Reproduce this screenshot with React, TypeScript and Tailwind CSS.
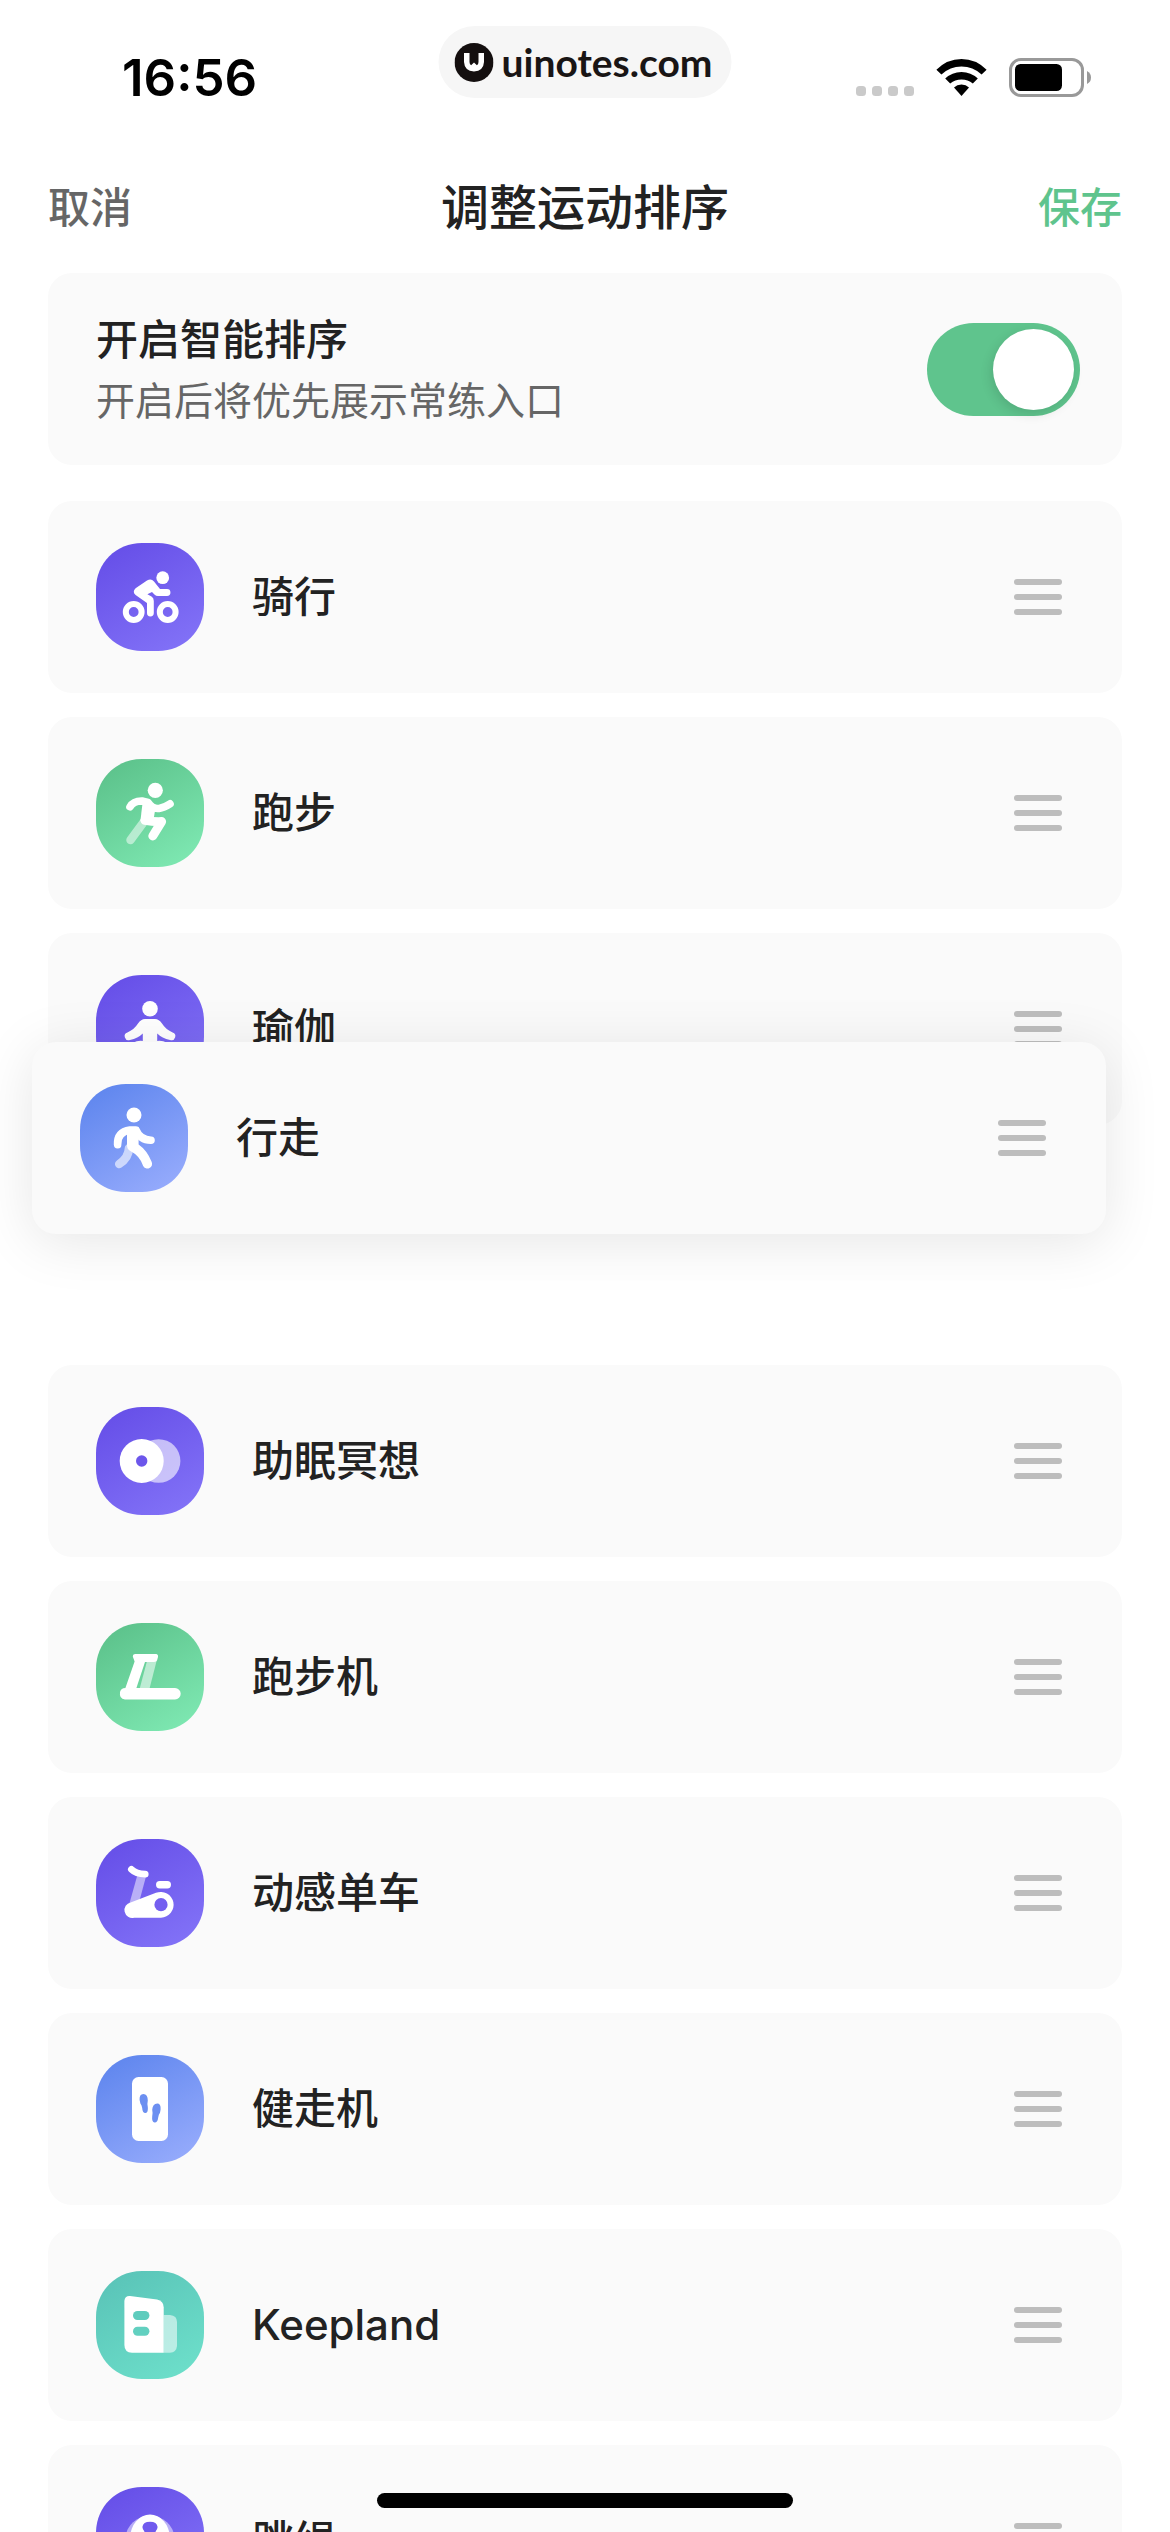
import { useState } from "react";
import type { ReactNode } from "react";

type Tone = "purple" | "green" | "blue" | "teal";

type Sport = {
  id: string;
  name: string;
  tone: Tone;
  glyph: ReactNode;
  dragging?: boolean;
};

const TONES: Record<Tone, [string, string]> = {
  purple: ["#664fe8", "#8272f7"],
  green: ["#5cc28b", "#7ee8b2"],
  blue: ["#5f86ee", "#96abfc"],
  teal: ["#5ac4b8", "#6ddfca"],
};

const SPORTS: Sport[] = [
  {
    id: "cycling",
    name: "骑行",
    tone: "purple",
    glyph: (
      <>
        <circle cx="66.7" cy="34.7" r="6.4" />
        <g fill="none" stroke="#fff" strokeWidth="6">
          <circle cx="37.7" cy="69" r="7.9" />
          <circle cx="71.7" cy="69" r="7.9" />
        </g>
        <path d="M51 37.6 Q55 35 58 38.4 L64 46 H71 A3.4 3.4 0 0 1 71 52.9 H62 Q60 52.9 58.4 51.4 L56 49 L51.4 51.2 L55.5 53.6 Q57.8 55 57.8 58 V70 A3.3 3.3 0 0 1 51 70 V60 L39.6 52 Q36 48.8 39.6 45.2 Z" />
      </>
    ),
  },
  {
    id: "running",
    name: "跑步",
    tone: "green",
    glyph: (
      <>
        <path d="M47 64 L34.5 81" fill="none" stroke="#fff" strokeOpacity="0.5" strokeWidth="8.5" strokeLinecap="round" />
        <circle cx="59.3" cy="31.3" r="7.6" />
        <path d="M34 47.8 Q37.5 41.8 46 42 L52 43.4 Q57 50.4 63 49.4 Q68 48.8 74 44.8" fill="none" stroke="#fff" strokeWidth="7.6" strokeLinecap="round" strokeLinejoin="round" />
        <path d="M47 40 L60 46 L57.6 60 L52 66 L44.4 62 Z" />
        <path d="M49 61.4 Q58 63 65.6 62.6 L56.8 77" fill="none" stroke="#fff" strokeWidth="9" strokeLinecap="round" strokeLinejoin="round" />
      </>
    ),
  },
  {
    id: "yoga",
    name: "瑜伽",
    tone: "purple",
    glyph: (
      <>
        <circle cx="54" cy="33.7" r="7.8" />
        <path d="M49 44 H59 Q63 44 66 48.6 Q70 55 76.6 57.4 A4 4 0 0 1 74 65 Q66 63.4 61.2 58.6 V70 H46.8 V58.6 Q42 63.4 34 65 A4 4 0 0 1 31.4 57.4 Q38 55 42 48.6 Q45 44 49 44 Z" />
        <path d="M34 76 Q41 65 54 72 Q67 65 74 76" fill="none" stroke="#fff" strokeWidth="7" strokeLinecap="round" />
      </>
    ),
  },
  {
    id: "walking",
    name: "行走",
    tone: "blue",
    dragging: true,
    glyph: (
      <>
        <path d="M49 64 Q48.6 74 39.2 80" fill="none" stroke="#fff" strokeOpacity="0.6" strokeWidth="8.5" strokeLinecap="round" />
        <circle cx="54" cy="31" r="7.5" />
        <path d="M37.6 60.6 Q37 48 50 46 L56 46 Q60 56 71 56.2" fill="none" stroke="#fff" strokeWidth="7.6" strokeLinecap="round" strokeLinejoin="round" />
        <path d="M47 43 H58.6 V60.6 Q67 66.4 71.6 77.8 A4.6 4.6 0 0 1 63.2 82 Q60 72 50.4 67 Q47 65.4 47 61 Z" />
      </>
    ),
  },
  {
    id: "sleep",
    name: "助眠冥想",
    tone: "purple",
    glyph: (
      <>
        <circle cx="62.6" cy="54" r="21.8" fillOpacity="0.6" />
        <circle cx="45.7" cy="54" r="22" />
        <circle cx="45.7" cy="54" r="5.7" fill="#6c56eb" />
      </>
    ),
  },
  {
    id: "treadmill",
    name: "跑步机",
    tone: "green",
    glyph: (
      <>
        <path d="M51 38 H60.6 L53.4 66 H43.6 Z" fillOpacity="0.55" />
        <path d="M39 31 H60 Q62.4 31.4 62 34 L61 37.6 Q60.4 39 58 39 H49 L40.4 65 H79 A5.7 5.7 0 0 1 79 76.4 H29 Q23 76 24 69 Q25 65 29.4 65 L38.6 38.6 L36.8 33.6 Q36.6 31.4 39 31 Z" />
      </>
    ),
  },
  {
    id: "spinning",
    name: "动感单车",
    tone: "purple",
    glyph: (
      <>
        <path d="M41.4 36 H50.4 L43.4 62 L33 66 Z" fillOpacity="0.5" />
        <path d="M35.4 30.4 Q40 35 49.2 35.2" fill="none" stroke="#fff" strokeWidth="6.8" strokeLinecap="round" />
        <rect x="60" y="42" width="15" height="7.4" rx="3.7" />
        <path d="M60 53.8 A12.9 12.9 0 1 1 65 78.7 H38 A7.8 7.8 0 0 1 34.6 63.4 Z" />
        <circle cx="65" cy="65.7" r="6.6" fill="#745ff0" />
      </>
    ),
  },
  {
    id: "walking-pad",
    name: "健走机",
    tone: "blue",
    glyph: (
      <>
        <rect x="36" y="22" width="36" height="64" rx="6.5" />
        <g fill="#6c8ff1">
          <path d="M43.6 45 Q43.2 39 47.4 39 Q51.8 39.4 51.8 45.4 Q51 49 51.8 52 Q52.4 57.6 49.6 58 Q46.4 58.2 46.2 53 Q45.8 50 44.4 48.4 Z" />
          <path d="M64.6 54.4 Q65 48.6 61.2 48.6 Q56.6 49 56.2 54.8 Q57 58.4 56.2 61.4 Q55.6 66.8 58.6 67.4 Q61.6 67.6 62.2 62.4 Q62.6 59.4 64 57.8 Z" />
        </g>
      </>
    ),
  },
  {
    id: "keepland",
    name: "Keepland",
    tone: "teal",
    glyph: (
      <>
        <path d="M67.6 44 H74 Q81 44.6 81 51 V75 Q80.4 81.4 74 81.8 H67.6 Z" fillOpacity="0.55" />
        <path d="M34 25 L61 28.6 Q67.7 30 67.7 36.4 V81.8 H36 Q28.4 81.4 28.4 74 V30 Q28.8 24.6 34 25 Z" />
        <rect x="37" y="40" width="16.4" height="9" rx="4.5" fill="#5eccbd" />
        <rect x="37" y="55.7" width="16.4" height="9" rx="4.5" fill="#62d0c0" />
      </>
    ),
  },
  {
    id: "rope",
    name: "跳绳",
    tone: "purple",
    glyph: (
      <>
        <ellipse cx="54" cy="50" rx="24" ry="21" fillOpacity="0.5" />
        <ellipse cx="54" cy="50" rx="19.6" ry="22.4" />
        <path d="M46.4 40 Q47 34.8 54 34.8 Q61 34.8 61.6 40 Q61.4 42.6 59.6 44.6 V62 H48.4 V44.6 Q46.6 42.6 46.4 40 Z" fill="#705aee" />
      </>
    ),
  },
];

function SportIcon({ id, tone, children }: { id: string; tone: Tone; children: ReactNode }) {
  const [from, to] = TONES[tone];
  return (
    <svg className="size-[108px] shrink-0" viewBox="0 0 108 108" fill="#fff" aria-hidden="true">
      <defs>
        <linearGradient id={`tone-${id}`} x1="0.2" y1="0" x2="0.8" y2="1">
          <stop offset="0" stopColor={from} />
          <stop offset="1" stopColor={to} />
        </linearGradient>
      </defs>
      <path
        d="M46 0 H62 C88 0 108 20 108 46 V62 C108 88 88 108 62 108 H46 C20 108 0 88 0 62 V46 C0 20 20 0 46 0 Z"
        fill={`url(#tone-${id})`}
      />
      {children}
    </svg>
  );
}

function SportRow({ sport }: { sport: Sport }) {
  return (
    <div
      className={
        sport.dragging
          ? "absolute -left-4 -top-[107px] z-10 flex h-48 w-full items-center rounded-3xl bg-[#fafafa] pl-12 pr-[60px] shadow-[0_8px_56px_rgba(0,0,0,0.1)]"
          : "flex h-48 items-center rounded-3xl bg-[#fafafa] pl-12 pr-[60px]"
      }
    >
      <SportIcon id={sport.id} tone={sport.tone}>
        {sport.glyph}
      </SportIcon>
      <span className="ml-12 flex-1 text-[42px] leading-[60px] font-medium">{sport.name}</span>
      <button type="button" aria-label={sport.name} className="flex w-12 cursor-grab flex-col gap-[9px]">
        <span className="h-1.5 rounded-full bg-[#bdbdbd]" />
        <span className="h-1.5 rounded-full bg-[#bdbdbd]" />
        <span className="h-1.5 rounded-full bg-[#bdbdbd]" />
      </button>
    </div>
  );
}

function StatusBar() {
  return (
    <div className="relative flex h-[141px] shrink-0 items-start justify-between pr-[78px] pl-[122px]">
      <span className="pt-12 font-[Inter] text-[51px] leading-[60px] font-semibold text-black">16:56</span>
      <div className="absolute top-[26px] left-1/2 flex h-[72px] w-[293px] -translate-x-1/2 items-center gap-2 rounded-full bg-[#f6f6f6] pl-4">
        <svg className="size-[39px] shrink-0" viewBox="0 0 39 39" aria-hidden="true">
          <circle cx="19.5" cy="19.5" r="19.5" fill="#140f0f" />
          <path
            d="M9.5 10 H15 V19 Q15 21.4 16.6 22.2 L19.5 19.6 L22.4 22.2 Q24 21.4 24 19 V10 H29.5 V19 Q29 28 19.5 28.4 Q10 28 9.5 19 Z"
            fill="#fff"
          />
        </svg>
        <span className="font-[Lato] text-[39px] leading-[48px] font-bold text-[#191515]">uinotes.com</span>
      </div>
      <svg className="mt-[57px] h-10 w-[236px]" viewBox="0 0 236 40" aria-hidden="true">
        <g fill="#cacaca">
          <rect x="0" y="29" width="10" height="10" rx="3.5" />
          <rect x="16" y="29" width="10" height="10" rx="3.5" />
          <rect x="32" y="29" width="10" height="10" rx="3.5" />
          <rect x="48" y="29" width="10" height="10" rx="3.5" />
        </g>
        <g fill="#000">
          <path d="M80.4 12.8 Q91 2 105.5 2 Q120 2 130.6 12.8 L125.6 17.4 Q117 9.4 105.5 9.4 Q94 9.4 85.4 17.4 Z" />
          <path d="M89.2 21.6 Q96 15 105.5 15 Q115 15 121.8 21.6 L116.8 26.4 Q112 22.4 105.5 22.4 Q99 22.4 94.2 26.4 Z" />
          <path d="M98 30.4 Q101 27.6 105.5 27.6 Q110 27.6 113 30.4 L105.5 39 Z" />
          <rect x="159" y="7" width="47" height="27" rx="5.5" />
        </g>
        <rect x="154.5" y="2.5" width="72" height="36" rx="10.5" fill="none" stroke="#999" strokeWidth="3" />
        <path d="M231 14 Q235 16 235 20.5 Q235 25 231 27 Z" fill="#999" />
      </svg>
    </div>
  );
}

export default function App() {
  const [smartSort, setSmartSort] = useState(true);

  return (
    <main className="relative flex h-screen flex-col overflow-hidden bg-white font-[Inter,'Noto_Sans_CJK_SC',sans-serif] text-[#222]">
      <StatusBar />

      <header className="grid h-[132px] shrink-0 grid-cols-3 items-center px-12 pt-0.5">
        <button type="button" className="justify-self-start text-[42px] leading-[60px] font-medium text-[#666]">
          取消
        </button>
        <h1 className="text-center text-5xl leading-[72px] font-medium">调整运动排序</h1>
        <button type="button" className="justify-self-end text-[42px] leading-[60px] font-medium text-[#5fc48d]">
          保存
        </button>
      </header>

      <div className="flex-1 overflow-y-auto px-12 [scrollbar-width:none]">
        <label className="flex h-48 items-center justify-between rounded-3xl bg-[#fafafa] pr-[42px] pl-12">
          <span className="flex flex-col pt-1">
            <span className="text-[42px] leading-[60px] font-medium">开启智能排序</span>
            <span className="text-[39px] leading-[62px] text-[#666]">开启后将优先展示常练入口</span>
          </span>
          <span className="relative h-[93px] w-[153px]">
            <input
              type="checkbox"
              role="switch"
              className="peer size-full appearance-none rounded-full bg-gray-200 checked:bg-[#5fc48d]"
              checked={smartSort}
              onChange={(event) => setSmartSort(event.target.checked)}
            />
            <span className="pointer-events-none absolute top-1.5 left-1.5 size-[81px] rounded-full bg-white peer-checked:right-1.5 peer-checked:left-auto peer-checked:shadow-[-2px_4px_12px_rgba(0,0,0,0.12)]" />
          </span>
        </label>

        <ul className="mt-9 flex flex-col gap-6">
          {SPORTS.map((sport) => (
            <li key={sport.id} className="relative h-48">
              <SportRow sport={sport} />
            </li>
          ))}
        </ul>
      </div>

      <div className="absolute bottom-6 left-1/2 z-20 h-[15px] w-[416px] -translate-x-1/2 rounded-full bg-black" />
    </main>
  );
}
